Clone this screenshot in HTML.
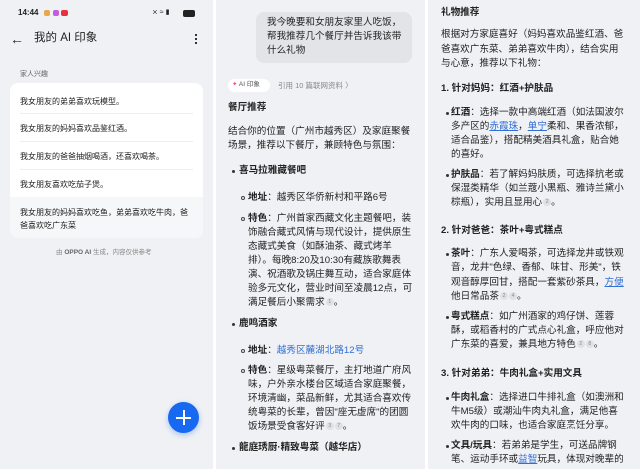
<!DOCTYPE html>
<html><head><meta charset="utf-8"><style>
*{margin:0;padding:0;box-sizing:border-box}
body{width:640px;height:469px;overflow:hidden;background:#fff;font-family:"Liberation Sans","Noto Sans CJK SC",sans-serif;color:#222;position:relative}
.p{position:absolute;top:0;height:469px;background:#f0f1f4;overflow:hidden}
.a{position:absolute;white-space:nowrap;line-height:1}
.m{font-size:9.6px}
.b{font-weight:bold}
.dot{position:absolute;width:3px;height:3px;border-radius:50%;background:#333}
.ring{position:absolute;width:4px;height:4px;border-radius:50%;border:1px solid #444}
.lk{color:#2f6fd6}
.u{color:#2f6fd6;text-decoration:underline}
.n{display:inline-block;width:8px;height:8px;border-radius:50%;background:#dfe1e5;font-size:5px;color:#888;text-align:center;line-height:8px;vertical-align:middle;margin-left:1px}
.row{position:absolute;left:20px;font-size:8px;color:#222;white-space:nowrap}
.sep{position:absolute;left:20px;right:20px;height:1px;background:#eceef0}
</style></head><body>
<!-- LEFT -->
<div class="p" style="left:0;width:213px">
 <div class="a" style="left:18px;top:9px;font-size:8px;font-weight:bold">14:44</div>
 <div style="position:absolute;left:44px;top:10px;width:6px;height:6px;border-radius:2px;background:#e9a84a"></div>
 <div style="position:absolute;left:53px;top:10px;width:6px;height:6px;border-radius:2px;background:#c35ce0"></div>
 <div style="position:absolute;left:61px;top:10px;width:7px;height:6px;border-radius:2px;background:#e8303a"></div>
 <div class="a" style="left:152px;top:9px;font-size:7px;color:#222">⨯ ≈ ▮</div>
 <div style="position:absolute;left:183px;top:10px;width:12px;height:7px;border-radius:2px;background:#222"></div>
 <div class="a" style="left:10px;top:32px;font-size:14px">←</div>
 <div class="a" style="left:34px;top:33px;font-size:11.5px">我的 AI 印象</div>
 <div style="position:absolute;left:195px;top:34px;width:2px;height:2px;background:#333;box-shadow:0 4px 0 #333,0 8px 0 #333"></div>
 <div class="a" style="left:20px;top:71px;font-size:7px;color:#666">家人兴趣</div>
 <div style="position:absolute;left:10px;top:83px;width:193px;height:155px;background:#fff;border-radius:8px;overflow:hidden">
  <div style="position:absolute;left:0;right:0;top:114px;bottom:0;background:#f6f7f8"></div>
  <div class="row" style="left:10px;top:13px">我女朋友的弟弟喜欢玩模型。</div>
  <div class="sep" style="left:10px;right:10px;top:30px"></div>
  <div class="row" style="left:10px;top:40px">我女朋友的妈妈喜欢品鉴红酒。</div>
  <div class="sep" style="left:10px;right:10px;top:58px"></div>
  <div class="row" style="left:10px;top:68px">我女朋友的爸爸抽烟喝酒，还喜欢喝茶。</div>
  <div class="sep" style="left:10px;right:10px;top:86px"></div>
  <div class="row" style="left:10px;top:96px">我女朋友喜欢吃茄子煲。</div>
  <div class="row" style="left:10px;top:124px">我女朋友的妈妈喜欢吃鱼，弟弟喜欢吃牛肉，爸</div>
  <div class="row" style="left:10px;top:137px">爸喜欢吃广东菜</div>
 </div>
 <div class="a" style="left:56px;top:250px;font-size:6.5px;color:#888">由 <b style="color:#666">OPPO AI</b> 生成，内容仅供参考</div>
 <div style="position:absolute;left:168px;top:402px;width:31px;height:31px;border-radius:50%;background:#1669f0;box-shadow:0 2px 6px rgba(22,105,240,.35)"></div>
 <div style="position:absolute;left:176px;top:417px;width:15px;height:1.5px;background:#fff"></div>
 <div style="position:absolute;left:183px;top:410px;width:1.5px;height:15px;background:#fff"></div>
</div>
<!-- MIDDLE -->
<div class="p" style="left:216px;width:209px">
 <div style="position:absolute;left:40px;top:12px;width:156px;height:51px;background:#e2e4e8;border-radius:8px"></div>
 <div class="a m" style="left:51px;top:18px">我今晚要和女朋友家里人吃饭，</div>
 <div class="a m" style="left:51px;top:32px">帮我推荐几个餐厅并告诉我该带</div>
 <div class="a m" style="left:51px;top:46px">什么礼物</div>
 <div style="position:absolute;left:12px;top:79px;width:42px;height:13px;border-radius:7px;background:#fff"></div>
 <div class="a" style="left:16px;top:82px;font-size:6.5px;color:#555"><span style="color:#e57">✦</span> AI 印象</div>
 <div class="a" style="left:62px;top:82px;font-size:7.5px;color:#888">引用 10 篇联网资料 〉</div>
 <div class="a m b" style="left:12px;top:103px">餐厅推荐</div>
 <div class="a m" style="left:12px;top:127px">结合你的位置（广州市越秀区）及家庭聚餐</div>
 <div class="a m" style="left:12px;top:141px">场景，推荐以下餐厅，兼顾特色与氛围：</div>
 <div class="dot" style="left:16px;top:170px"></div>
 <div class="a m b" style="left:23px;top:166px">喜马拉雅藏餐吧</div>
 <div class="ring" style="left:25px;top:196px"></div>
 <div class="a m" style="left:32px;top:193px"><b>地址</b>：越秀区华侨新村和平路6号</div>
 <div class="ring" style="left:25px;top:217px"></div>
 <div class="a m" style="left:32px;top:214px"><b>特色</b>：广州首家西藏文化主题餐吧，装</div>
 <div class="a m" style="left:32px;top:228px">饰融合藏式风情与现代设计，提供原生</div>
 <div class="a m" style="left:32px;top:242px">态藏式美食（如酥油茶、藏式烤羊</div>
 <div class="a m" style="left:32px;top:256px">排）。每晚8:20及10:30有藏族歌舞表</div>
 <div class="a m" style="left:32px;top:270px">演、祝酒歌及锅庄舞互动，适合家庭体</div>
 <div class="a m" style="left:32px;top:284px">验多元文化，营业时间至凌晨12点，可</div>
 <div class="a m" style="left:32px;top:298px">满足餐后小聚需求<span class="n">1</span>。</div>
 <div class="dot" style="left:16px;top:323px"></div>
 <div class="a m b" style="left:23px;top:319px">鹿鸣酒家</div>
 <div class="ring" style="left:25px;top:349px"></div>
 <div class="a m" style="left:32px;top:346px"><b>地址</b>：<span class="lk">越秀区麓湖北路12号</span></div>
 <div class="ring" style="left:25px;top:369px"></div>
 <div class="a m" style="left:32px;top:366px"><b>特色</b>：星级粤菜餐厅，主打地道广府风</div>
 <div class="a m" style="left:32px;top:380px">味，户外亲水楼台区域适合家庭聚餐，</div>
 <div class="a m" style="left:32px;top:394px">环境清幽，菜品新鲜，尤其适合喜欢传</div>
 <div class="a m" style="left:32px;top:408px">统粤菜的长辈，曾因"座无虚席"的团圆</div>
 <div class="a m" style="left:32px;top:422px">饭场景受食客好评<span class="n">3</span><span class="n">7</span>。</div>
 <div class="dot" style="left:16px;top:447px"></div>
 <div class="a m b" style="left:23px;top:443px">龍庭琇厨·精致粤菜（越华店）</div>
</div>
<!-- RIGHT -->
<div class="p" style="left:428px;width:212px">
 <div class="a m b" style="left:13px;top:8px">礼物推荐</div>
 <div class="a m" style="left:13px;top:30px">根据对方家庭喜好（妈妈喜欢品鉴红酒、爸</div>
 <div class="a m" style="left:13px;top:45px">爸喜欢广东菜、弟弟喜欢牛肉），结合实用</div>
 <div class="a m" style="left:13px;top:59px">与心意，推荐以下礼物：</div>
 <div class="a m b" style="left:13px;top:84px">1. 针对妈妈：红酒+护肤品</div>
 <div class="dot" style="left:18px;top:112px"></div>
 <div class="a m" style="left:23px;top:108px"><b>红酒</b>：选择一款中高端红酒（如法国波尔</div>
 <div class="a m" style="left:23px;top:122px">多产区的<span class="u">赤霞珠</span>，<span class="u">单宁</span>柔和、果香浓郁，</div>
 <div class="a m" style="left:23px;top:136px">适合品鉴），搭配精美酒具礼盒，贴合她</div>
 <div class="a m" style="left:23px;top:150px">的喜好。</div>
 <div class="dot" style="left:18px;top:174px"></div>
 <div class="a m" style="left:23px;top:170px"><b>护肤品</b>：若了解妈妈肤质，可选择抗老或</div>
 <div class="a m" style="left:23px;top:184px">保湿类精华（如兰蔻小黑瓶、雅诗兰黛小</div>
 <div class="a m" style="left:23px;top:198px">棕瓶），实用且显用心<span class="n">2</span>。</div>
 <div class="a m b" style="left:13px;top:226px">2. 针对爸爸：茶叶+粤式糕点</div>
 <div class="dot" style="left:18px;top:253px"></div>
 <div class="a m" style="left:23px;top:249px"><b>茶叶</b>：广东人爱喝茶，可选择龙井或铁观</div>
 <div class="a m" style="left:23px;top:263px">音，龙井"色绿、香郁、味甘、形美"，铁</div>
 <div class="a m" style="left:23px;top:278px">观音醇厚回甘，搭配一套紫砂茶具，<span class="u">方便</span></div>
 <div class="a m" style="left:23px;top:292px">他日常品茶<span class="n">2</span><span class="n">4</span>。</div>
 <div class="dot" style="left:18px;top:316px"></div>
 <div class="a m" style="left:23px;top:312px"><b>粤式糕点</b>：如广州酒家的鸡仔饼、莲蓉</div>
 <div class="a m" style="left:23px;top:326px">酥，或稻香村的广式点心礼盒，呼应他对</div>
 <div class="a m" style="left:23px;top:340px">广东菜的喜爱，兼具地方特色<span class="n">2</span><span class="n">8</span>。</div>
 <div class="a m b" style="left:13px;top:369px">3. 针对弟弟：牛肉礼盒+实用文具</div>
 <div class="dot" style="left:18px;top:397px"></div>
 <div class="a m" style="left:23px;top:393px"><b>牛肉礼盒</b>：选择进口牛排礼盒（如澳洲和</div>
 <div class="a m" style="left:23px;top:407px">牛M5级）或潮汕牛肉丸礼盒，满足他喜</div>
 <div class="a m" style="left:23px;top:421px">欢牛肉的口味，也适合家庭烹饪分享。</div>
 <div class="dot" style="left:18px;top:445px"></div>
 <div class="a m" style="left:23px;top:441px"><b>文具/玩具</b>：若弟弟是学生，可送品牌钢</div>
 <div class="a m" style="left:23px;top:455px">笔、运动手环或<span class="u">益智</span>玩具，体现对晚辈的</div>
</div>
</body></html>
